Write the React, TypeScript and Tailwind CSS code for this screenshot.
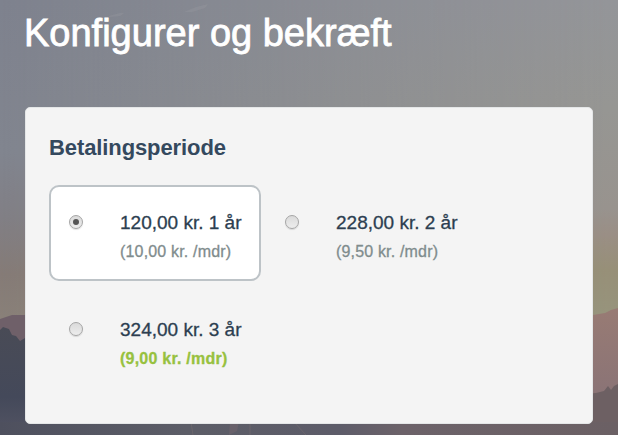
import React from "react";
import clsx from "clsx";

interface BillingOption {
  id: string;
  label: string;
  monthly: string;
  highlight?: boolean;
}

const options: BillingOption[] = [
  { id: "1y", label: "120,00 kr. 1 år", monthly: "(10,00 kr. /mdr)" },
  { id: "2y", label: "228,00 kr. 2 år", monthly: "(9,50 kr. /mdr)" },
  { id: "3y", label: "324,00 kr. 3 år", monthly: "(9,00 kr. /mdr)", highlight: true },
];

// Dusk landscape behind the card
function Backdrop() {
  return (
    <svg
      className="absolute inset-0 h-full w-full"
      viewBox="0 0 618 435"
      preserveAspectRatio="none"
      aria-hidden="true"
    >
      <defs>
        <linearGradient id="skyLeft" x1="0" y1="0" x2="0" y2="1">
          <stop offset="0" stopColor="#7e828e" />
          <stop offset="0.35" stopColor="#81858f" />
          <stop offset="0.5" stopColor="#817f85" />
          <stop offset="0.63" stopColor="#857b77" />
          <stop offset="0.73" stopColor="#898079" />
        </linearGradient>
        <linearGradient id="skyRight" x1="0" y1="0" x2="0" y2="1">
          <stop offset="0" stopColor="#949599" />
          <stop offset="0.25" stopColor="#969693" />
          <stop offset="0.48" stopColor="#98938e" />
          <stop offset="0.54" stopColor="#9a8f85" />
          <stop offset="0.62" stopColor="#979078" />
          <stop offset="0.72" stopColor="#97947c" />
        </linearGradient>
        <linearGradient id="fade" x1="0" y1="0" x2="1" y2="0">
          <stop offset="0" stopColor="#000" />
          <stop offset="0.6" stopColor="#aaa" />
          <stop offset="1" stopColor="#fff" />
        </linearGradient>
        <mask id="fadeMask">
          <rect width="618" height="435" fill="url(#fade)" />
        </mask>
        <linearGradient id="rock" x1="0" y1="0" x2="0" y2="1">
          <stop offset="0" stopColor="#987b74" />
          <stop offset="0.65" stopColor="#8b7476" />
          <stop offset="1" stopColor="#77676c" />
        </linearGradient>
        <linearGradient id="trees" x1="0" y1="0" x2="0" y2="1">
          <stop offset="0" stopColor="#494b56" />
          <stop offset="0.65" stopColor="#44495a" />
          <stop offset="1" stopColor="#535463" />
        </linearGradient>
        <linearGradient id="ground" x1="0" y1="0" x2="1" y2="0">
          <stop offset="0" stopColor="#4e505e" />
          <stop offset="0.3" stopColor="#5c5d67" />
          <stop offset="0.55" stopColor="#5d5c69" />
          <stop offset="0.65" stopColor="#6c6269" />
          <stop offset="1" stopColor="#6b6064" />
        </linearGradient>
      </defs>
      <rect width="618" height="435" fill="url(#skyLeft)" />
      <rect width="618" height="435" fill="url(#skyRight)" mask="url(#fadeMask)" />
      <path d="M109 16l11-3 4 0-4 3-11 1zM184 12l12-5 12-3-3 4-13 4z" fill="#9a9ca2" opacity="0.3" />
      <path d="M0 319l12-4 13 0 30 8v60H0z" fill="#6f6069" />
      <path d="M0 330l3-3 6 2 3 6 4 1 4 5 5-3 20 10v87H0z" fill="url(#trees)" />
      <path d="M560 330l33-15 12-2 6-3 7-2v127h-58z" fill="url(#rock)" />
      <path d="M585 394l11-1 8-2 4-5 3 4 3-4 4-2v51h-33z" fill="#6d6063" />
      <rect y="422" width="618" height="13" fill="url(#ground)" />
      <path d="M191 422l2 13M250 422v13M294 422l12 13" stroke="#8a7c76" strokeWidth="1" opacity="0.3" fill="none" />
      <path d="M230 422l9 0-2 9-8 4z" fill="#7b6970" opacity="0.4" />
    </svg>
  );
}

function Radio({ checked }: { checked: boolean }) {
  return (
    <span className="flex size-3.5 shrink-0 items-center justify-center rounded-full border border-[#a5a5a5] bg-linear-to-b from-[#dadada] to-[#ededed] shadow-[0_1px_1px_rgba(0,0,0,0.12)]">
      {checked && <span className="size-1.5 rounded-full bg-[#555]" />}
    </span>
  );
}

function Option({
  option,
  selected,
  onSelect,
}: {
  option: BillingOption;
  selected: boolean;
  onSelect: () => void;
}) {
  return (
    <button
      type="button"
      role="radio"
      aria-checked={selected}
      onClick={onSelect}
      className={clsx(
        "flex h-24 w-[212px] rounded-[10px] border-2 pt-[21px] pl-[18px] text-left",
        selected ? "border-[#bdc3c7] bg-white" : "border-transparent"
      )}
    >
      <span className="mt-[7px]">
        <Radio checked={selected} />
      </span>
      <span className="ml-[37px] flex flex-col whitespace-nowrap">
        <span className="text-[19px] leading-[29px] text-[#2c3e50] [-webkit-text-stroke:0.3px]">
          {option.label}
        </span>
        <span
          className={clsx(
            "text-[16px] leading-[29px] [-webkit-text-stroke:0.3px]",
            option.highlight
              ? "font-bold tracking-[0.23px] text-[#97c13f]"
              : "tracking-[0.17px] text-[#7f8c8d]"
          )}
        >
          {option.monthly}
        </span>
      </span>
    </button>
  );
}

export default function App() {
  const [selected, setSelected] = React.useState("1y");

  return (
    <div className="relative h-[435px] w-[618px] overflow-hidden font-['Liberation_Sans',Arial,sans-serif]">
      <Backdrop />
      <main className="relative pt-[11px] pl-[25px]">
        <h1 className="-ml-px h-24 text-[38px] leading-[44px] whitespace-nowrap text-white [-webkit-text-stroke:0.8px]">
          Konfigurer og bekræft
        </h1>
        <section className="h-[317px] w-[568px] rounded-[5px] border border-[#e4e6e7] bg-[#f4f4f4] pt-[25px] pl-[23px]">
          <h2 className="text-[22px] leading-[30px] font-bold tracking-[-0.1px] text-[#34495e]">
            Betalingsperiode
          </h2>
          <div role="radiogroup" className="mt-[22px] grid grid-cols-[212px_212px] gap-x-1 gap-y-[11px]">
            {options.map((option) => (
              <Option
                key={option.id}
                option={option}
                selected={selected === option.id}
                onSelect={() => setSelected(option.id)}
              />
            ))}
          </div>
        </section>
      </main>
    </div>
  );
}
